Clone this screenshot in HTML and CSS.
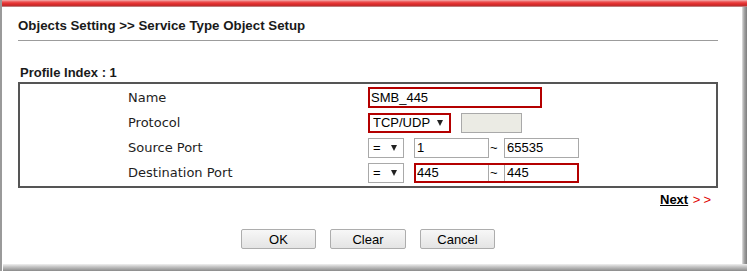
FILE: index.html
```html
<!DOCTYPE html>
<html lang="en">

<head>
  <meta charset="UTF-8">
  <meta name="viewport" content="width=device-width, initial-scale=1.0">
  <title>Service Type Object Setup</title>
  <link rel="stylesheet" href="styles.css">
</head>

<body>
  <div class="frame">
    <div class="topbar"></div>
    <div class="mid">
      <div class="page">
        <h3 class="title">Objects Setting &gt;&gt; Service Type Object Setup</h3>
        <div class="rule"></div>
        <div class="profile">Profile Index : 1</div>

        <div class="setup">
          <div class="label">Name</div>
          <div class="field">
            <input class="name hl" type="text" value="SMB_445">
          </div>

          <div class="label">Protocol</div>
          <div class="field">
            <span class="select-wrap proto hl">
              <select><option>TCP/UDP</option></select>
            </span>
            <input class="proto-num" type="text" disabled>
          </div>

          <div class="label">Source Port</div>
          <div class="field">
            <span class="select-wrap op">
              <select><option>=</option></select>
            </span>
            <span class="range">
              <input class="port" type="text" value="1">
              <span class="tilde">~</span>
              <input class="port" type="text" value="65535">
            </span>
          </div>

          <div class="label">Destination Port</div>
          <div class="field">
            <span class="select-wrap op">
              <select><option>=</option></select>
            </span>
            <span class="range hl-range">
              <input class="port" type="text" value="445">
              <span class="tilde">~</span>
              <input class="port" type="text" value="445">
            </span>
          </div>
        </div>

        <div class="next-row">
          <a class="next" href="#">Next</a> <span class="arrows">&gt;&gt;</span>
        </div>

        <div class="actions">
          <button class="btn">OK</button>
          <button class="btn clear">Clear</button>
          <button class="btn">Cancel</button>
        </div>
      </div>
      <div class="rshadow"></div>
    </div>
    <div class="bshadow"></div>
  </div>
</body>

</html>
```

FILE: styles.css
```css
body {
  margin: 0;
  font-family: "Liberation Sans", Arial, sans-serif;
  font-size: 13px;
  color: #000;
  background: #fff;
}

.frame {
  width: 747px;
  height: 271px;
  box-sizing: border-box;
  border-left: 2px solid #9a9a9a;
  display: flex;
  flex-direction: column;
}

.topbar {
  height: 7px;
  background: linear-gradient(to bottom, #f4b0b0 0, #ec5050 2px, #e02a2a 4px, #b83030 6px, #c8c8c8 7px);
}

.mid {
  flex: 1;
  display: flex;
}

.page {
  flex: 1;
  padding: 11px 24px 0 16px;
}

.rshadow {
  width: 5px;
  background: linear-gradient(to right, #e2e2e2, #a8a8a8 40%, #7c7c7c);
}

.bshadow {
  height: 7px;
  margin-left: 1px;
  background: linear-gradient(to bottom, #f0f0f0, #c4c4c4 40%, #8a8a8a);
}

.title {
  margin: 0;
  font-size: 13.3px;
  line-height: 15px;
  font-weight: bold;
  color: #1a1a1a;
}

.rule {
  margin-top: 7px;
  border-top: 1px solid #9c9c9c;
}

.profile {
  margin-top: 24px;
  padding-left: 2px;
  font-weight: bold;
  line-height: 15px;
  color: #1a1a1a;
}

.setup {
  margin-top: 2px;
  border: 2px solid #555;
  padding: 1px 0;
  display: grid;
  grid-template-columns: 348px 1fr;
  grid-auto-rows: 25px;
}

.label {
  display: flex;
  align-items: center;
  padding-left: 108px;
  font-family: "DejaVu Sans", Verdana, sans-serif;
  font-size: 13px;
  color: #1e1e1e;
}

.field {
  display: flex;
  align-items: center;
}

input,
select {
  font-family: "Liberation Sans", Arial, sans-serif;
  font-size: 13px;
  color: #000;
  margin: 0;
  box-sizing: border-box;
  border-radius: 0;
  outline: none;
}

input {
  height: 20px;
  border: 1px solid #a9a9a9;
  padding: 0 2px;
  background: #fff;
}

.hl {
  border: 2px solid #b40000;
}

input.name {
  width: 174px;
  height: 21px;
  padding: 0 1px;
}

.select-wrap {
  position: relative;
  display: inline-flex;
  height: 20px;
  box-sizing: border-box;
  border: 1px solid #a9a9a9;
  background: #fff;
}

.select-wrap.hl {
  border: 2px solid #b40000;
}

.select-wrap select {
  appearance: none;
  -webkit-appearance: none;
  border: 0;
  background: transparent;
  height: 100%;
  width: 100%;
  padding: 0 0 0 4px;
}

.select-wrap::after {
  content: "";
  position: absolute;
  right: 6px;
  top: 50%;
  margin-top: -3px;
  border-left: 3.5px solid transparent;
  border-right: 3.5px solid transparent;
  border-top: 6px solid #222;
  pointer-events: none;
}

.select-wrap.proto {
  width: 83px;
}

.select-wrap.proto select {
  padding-left: 3px;
}

.select-wrap.op {
  width: 36px;
}

.proto-num {
  margin-left: 10px;
  width: 61px;
  background: #ebebe4;
  border-color: #a9a9a9;
}

.range {
  margin-left: 10px;
  display: inline-flex;
  align-items: center;
}

.hl-range {
  outline: 2px solid #b40000;
  outline-offset: -2px;
}

.port {
  width: 75px;
}

.tilde {
  width: 15px;
  padding-left: 1px;
  box-sizing: border-box;
}

.next-row {
  margin-top: 4px;
  text-align: right;
  padding-right: 4px;
  line-height: 15px;
}

.next {
  color: #000;
  font-weight: bold;
  text-decoration: underline;
}

.arrows {
  margin-left: 1px;
  color: #e00000;
  letter-spacing: 3px;
}

.actions {
  margin-top: 22px;
  display: flex;
  justify-content: center;
  gap: 14px;
}

.btn {
  width: 75px;
  height: 20px;
  padding: 0;
  font-family: "Liberation Sans", Arial, sans-serif;
  font-size: 13px;
  color: #000;
  border: 1px solid #adadad;
  border-radius: 2px;
  background: linear-gradient(to bottom, #f7f7f7, #e4e4e4);
}

.btn.clear {
  width: 76px;
}
```
